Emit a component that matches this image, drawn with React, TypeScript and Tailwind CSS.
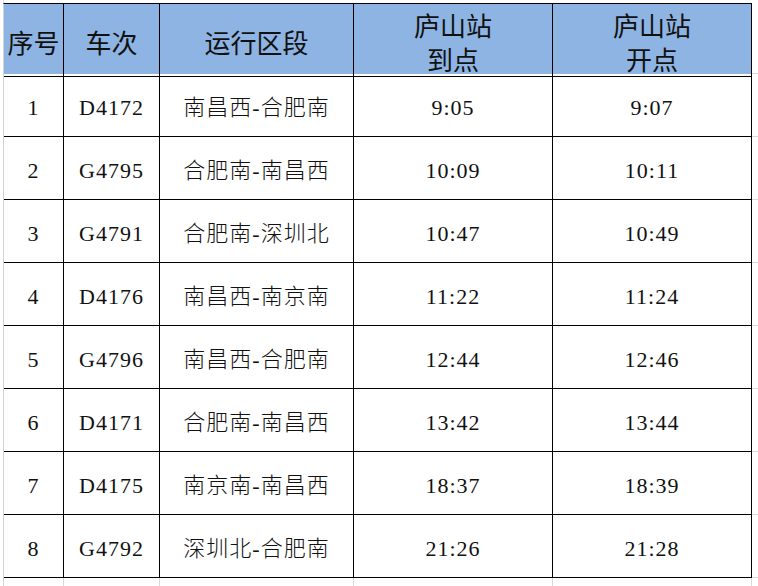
const rows = [
  ["1", "D4172", "南昌西-合肥南", "9:05", "9:07"],
  ["2", "G4795", "合肥南-南昌西", "10:09", "10:11"],
  ["3", "G4791", "合肥南-深圳北", "10:47", "10:49"],
  ["4", "D4176", "南昌西-南京南", "11:22", "11:24"],
  ["5", "G4796", "南昌西-合肥南", "12:44", "12:46"],
  ["6", "D4171", "合肥南-南昌西", "13:42", "13:44"],
  ["7", "D4175", "南京南-南昌西", "18:37", "18:39"],
  ["8", "G4792", "深圳北-合肥南", "21:26", "21:28"],
];

const cols = "grid grid-cols-[60px_96px_194px_199px_199px]";
const head = "flex flex-col items-center justify-center border-r border-b border-black pt-[4px] text-[26px] leading-[34px]";
const cell = "flex items-center justify-center border-r border-b border-black pt-[5px] text-[22px] tracking-[1px]";

export default function App() {
  return (
    <div className="w-[758px] h-[586px] bg-white overflow-hidden text-[#111]">
      <div className="h-[3px] ml-[3px] border-l border-[#d9d9d9]" />
      <div className="flex">
        <div
          className="ml-[3px] border-l border-t border-l-[#d4d4d4] border-t-black"
          style={{ fontFamily: '"Noto Sans CJK SC", sans-serif' }}
        >
          <div className={`${cols} h-[70px] bg-[#8db4e2]`}>
            <div className={head}>序号</div>
            <div className={head}>车次</div>
            <div className={head}>运行区段</div>
            <div className={head}>
              <span>庐山站</span>
              <span>到点</span>
            </div>
            <div className={head}>
              <span>庐山站</span>
              <span>开点</span>
            </div>
          </div>
          {rows.map((r) => (
            <div
              key={r[0]}
              className={`${cols} h-[63px] font-light`}
              style={{ fontFamily: '"Liberation Serif", "Noto Sans CJK SC", serif' }}
            >
              {r.map((v, i) => (
                <div key={i} className={cell}>
                  {v}
                </div>
              ))}
            </div>
          ))}
          <div className={`${cols} h-[9px]`}>
            {[0, 1, 2, 3, 4].map((i) => (
              <div key={i} className="border-r border-[#d9d9d9]" />
            ))}
          </div>
        </div>
        <div className="flex-1 pt-[1px]">
          <div className="h-[70px] border-b border-[#d9d9d9]" />
          {rows.map((r) => (
            <div key={r[0]} className="h-[63px] border-b border-[#d9d9d9]" />
          ))}
        </div>
      </div>
    </div>
  );
}
